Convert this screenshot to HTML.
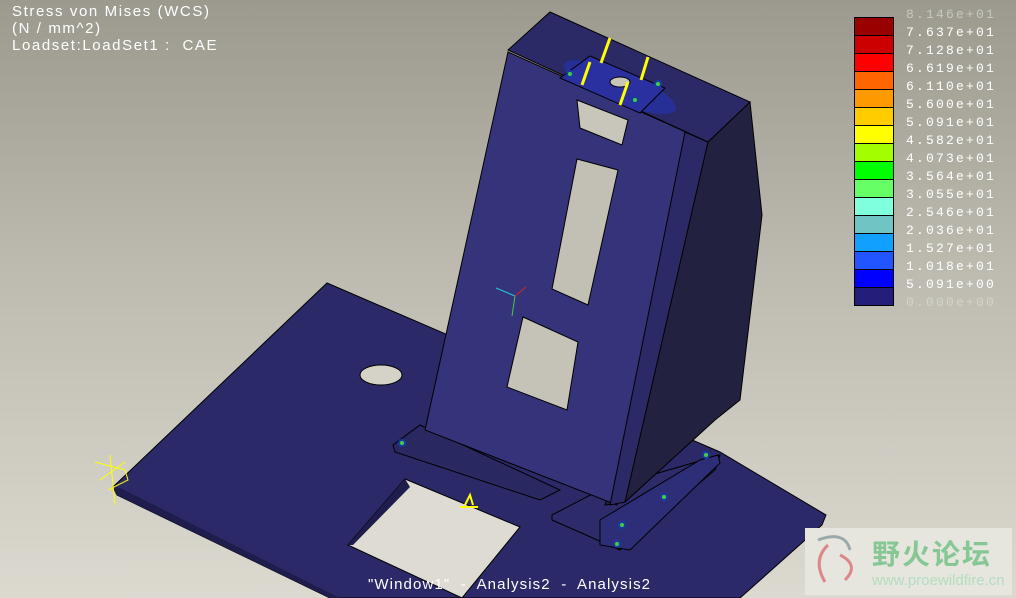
<!DOCTYPE html>
<html><head><meta charset="utf-8"><style>
html,body{margin:0;padding:0;width:1016px;height:598px;overflow:hidden}
body{background:linear-gradient(#9c9a8e,#bdbbb0 45%,#dcdad0);position:relative;font-family:"Liberation Sans",sans-serif}
.t{position:absolute;color:#fff;font-size:15px;line-height:15px;white-space:pre;letter-spacing:1.6px}
.lg{position:absolute;left:906px;font-family:"Liberation Mono",monospace;font-size:13px;color:#fff;letter-spacing:2.2px}
</style></head><body>
<svg width="1016" height="598" style="position:absolute;left:0;top:0">
<polygon points="327,283 720,452 826,515 822,525 740,598 330,598 117,495 113,487" fill="#2b2967" stroke="#000" stroke-width="1"/>
<polygon points="113,487 117,495 330,598 340,598 120,488" fill="#1f1d4d"/>
<polygon points="405,479 520,527 462,598 348,545" fill="#dedcd2" stroke="#000"/>
<polygon points="405,479 410,487 353,545 348,545" fill="#1f1d4d"/>
<ellipse cx="381" cy="375" rx="21" ry="10" fill="#d5d3c8" stroke="#000"/>
<polygon points="393,445 420,425 560,490 540,500 395,452" fill="#2a2860" stroke="#000"/>
<polygon points="552,515 600,490 720,455 715,470 620,550 552,520" fill="#2d2b6a" stroke="#000"/>
<polygon points="600,520 700,460 718,455 720,463 630,550 600,545" fill="#2e2e78" stroke="#000"/>
<polygon points="708,142 750,102 762,215 740,400 715,420 625,502 605,505" fill="#22213f" stroke="#000"/>
<polygon points="508,52 708,142 617,505 425,430" fill="#35337a" stroke="#000"/>
<polygon points="685,132 708,142 625,502 610,505" fill="#2c2a66" stroke="#000"/>
<polygon points="508,50 550,12 750,102 708,142" fill="#2c2a66" stroke="#000"/>
<ellipse cx="620" cy="87" rx="60" ry="16" fill="#2233bb" opacity="0.55" transform="rotate(22 620 87)"/>
<polygon points="560,78 590,56 665,88 640,113" fill="#2a30a0" stroke="#000"/>
<ellipse cx="620" cy="82" rx="10" ry="5" fill="#c8c6bb" stroke="#000"/>
<polygon points="577,100 628,120 622,145 580,128" fill="#c8c6bb" stroke="#000"/>
<polygon points="577,159 618,170 588,305 552,289" fill="#c2c0b4" stroke="#000"/>
<polygon points="523,317 578,342 567,410 507,387" fill="#c5c3b8" stroke="#000"/>
<g fill="#44cc44" stroke="#1a3aa0" stroke-width="2">
<circle cx="570" cy="74" r="3"/><circle cx="635" cy="100" r="3"/><circle cx="658" cy="84" r="3"/><circle cx="402" cy="443" r="3"/><circle cx="706" cy="455" r="3"/><circle cx="664" cy="497" r="3"/><circle cx="617" cy="544" r="3"/><circle cx="622" cy="525" r="3"/>
</g>
<g stroke="#ffff00" stroke-width="3">
<line x1="610" y1="38" x2="601" y2="63"/><line x1="648" y1="57" x2="641" y2="80"/><line x1="590" y1="62" x2="582" y2="85"/><line x1="628" y1="82" x2="620" y2="105"/>
</g>
<line x1="496" y1="288" x2="515" y2="296" stroke="#2cd" /><line x1="515" y1="296" x2="512" y2="316" stroke="#4c4"/><line x1="515" y1="296" x2="526" y2="287" stroke="#d22"/>
<g stroke="#ffff00" fill="none"><path d="M95,462 L125,470 L128,480 L108,490 M110,455 L115,505 M100,480 L125,462"/><path d="M465,505 L470,495 L473,505 M460,507 L478,507" stroke-width="2"/></g>
<rect x="805" y="528" width="207" height="67" fill="#e6e6de"/>
<path d="M828,545 Q812,560 825,582 M840,555 Q860,565 845,580" stroke="#d88" stroke-width="3" fill="none"/>
<path d="M818,540 Q845,530 850,550" stroke="#9aa" stroke-width="3" fill="none"/>
</svg>
<div class="t" style="left:12px;top:4px">Stress von Mises (WCS)</div>
<div class="t" style="left:12px;top:21px">(N / mm^2)</div>
<div class="t" style="left:12px;top:38px">Loadset:LoadSet1 :  CAE</div>
<div class="t" style="left:368px;top:577px;letter-spacing:1.1px">"Window1"  -  Analysis2  -  Analysis2</div>
<div style="position:absolute;left:872px;top:533px;font-family:'Liberation Sans','Noto Sans CJK SC',sans-serif;font-size:28px;font-weight:bold;color:#86c795;letter-spacing:2px">野火论坛</div>
<div style="position:absolute;left:872px;top:572px;font-size:15px;color:#b4dcc0">www.proewildfire.cn</div>
<div style="position:absolute;left:854px;top:17px;width:38px;border:1px solid #000">
<div style="height:17px;background:#990000;border-bottom:1px solid #000"></div>
<div style="height:17px;background:#cc0000;border-bottom:1px solid #000"></div>
<div style="height:17px;background:#ff0000;border-bottom:1px solid #000"></div>
<div style="height:17px;background:#ff6600;border-bottom:1px solid #000"></div>
<div style="height:17px;background:#ff9900;border-bottom:1px solid #000"></div>
<div style="height:17px;background:#ffcc00;border-bottom:1px solid #000"></div>
<div style="height:17px;background:#ffff00;border-bottom:1px solid #000"></div>
<div style="height:17px;background:#a3ff00;border-bottom:1px solid #000"></div>
<div style="height:17px;background:#00ff00;border-bottom:1px solid #000"></div>
<div style="height:17px;background:#66ff66;border-bottom:1px solid #000"></div>
<div style="height:17px;background:#80ffdd;border-bottom:1px solid #000"></div>
<div style="height:17px;background:#70c4c4;border-bottom:1px solid #000"></div>
<div style="height:17px;background:#12a0ff;border-bottom:1px solid #000"></div>
<div style="height:17px;background:#2255ff;border-bottom:1px solid #000"></div>
<div style="height:17px;background:#0000ff;border-bottom:1px solid #000"></div>
<div style="height:17px;background:#221e7a"></div>
</div>
<div class="lg" style="top:7px;color:#c8c8c4">8.146e+01</div>
<div class="lg" style="top:25px">7.637e+01</div>
<div class="lg" style="top:43px">7.128e+01</div>
<div class="lg" style="top:61px">6.619e+01</div>
<div class="lg" style="top:79px">6.110e+01</div>
<div class="lg" style="top:97px">5.600e+01</div>
<div class="lg" style="top:115px">5.091e+01</div>
<div class="lg" style="top:133px">4.582e+01</div>
<div class="lg" style="top:151px">4.073e+01</div>
<div class="lg" style="top:169px">3.564e+01</div>
<div class="lg" style="top:187px">3.055e+01</div>
<div class="lg" style="top:205px">2.546e+01</div>
<div class="lg" style="top:223px">2.036e+01</div>
<div class="lg" style="top:241px">1.527e+01</div>
<div class="lg" style="top:259px">1.018e+01</div>
<div class="lg" style="top:277px">5.091e+00</div>
<div class="lg" style="top:295px;color:#d4d4cc">0.000e+00</div>
</body></html>
